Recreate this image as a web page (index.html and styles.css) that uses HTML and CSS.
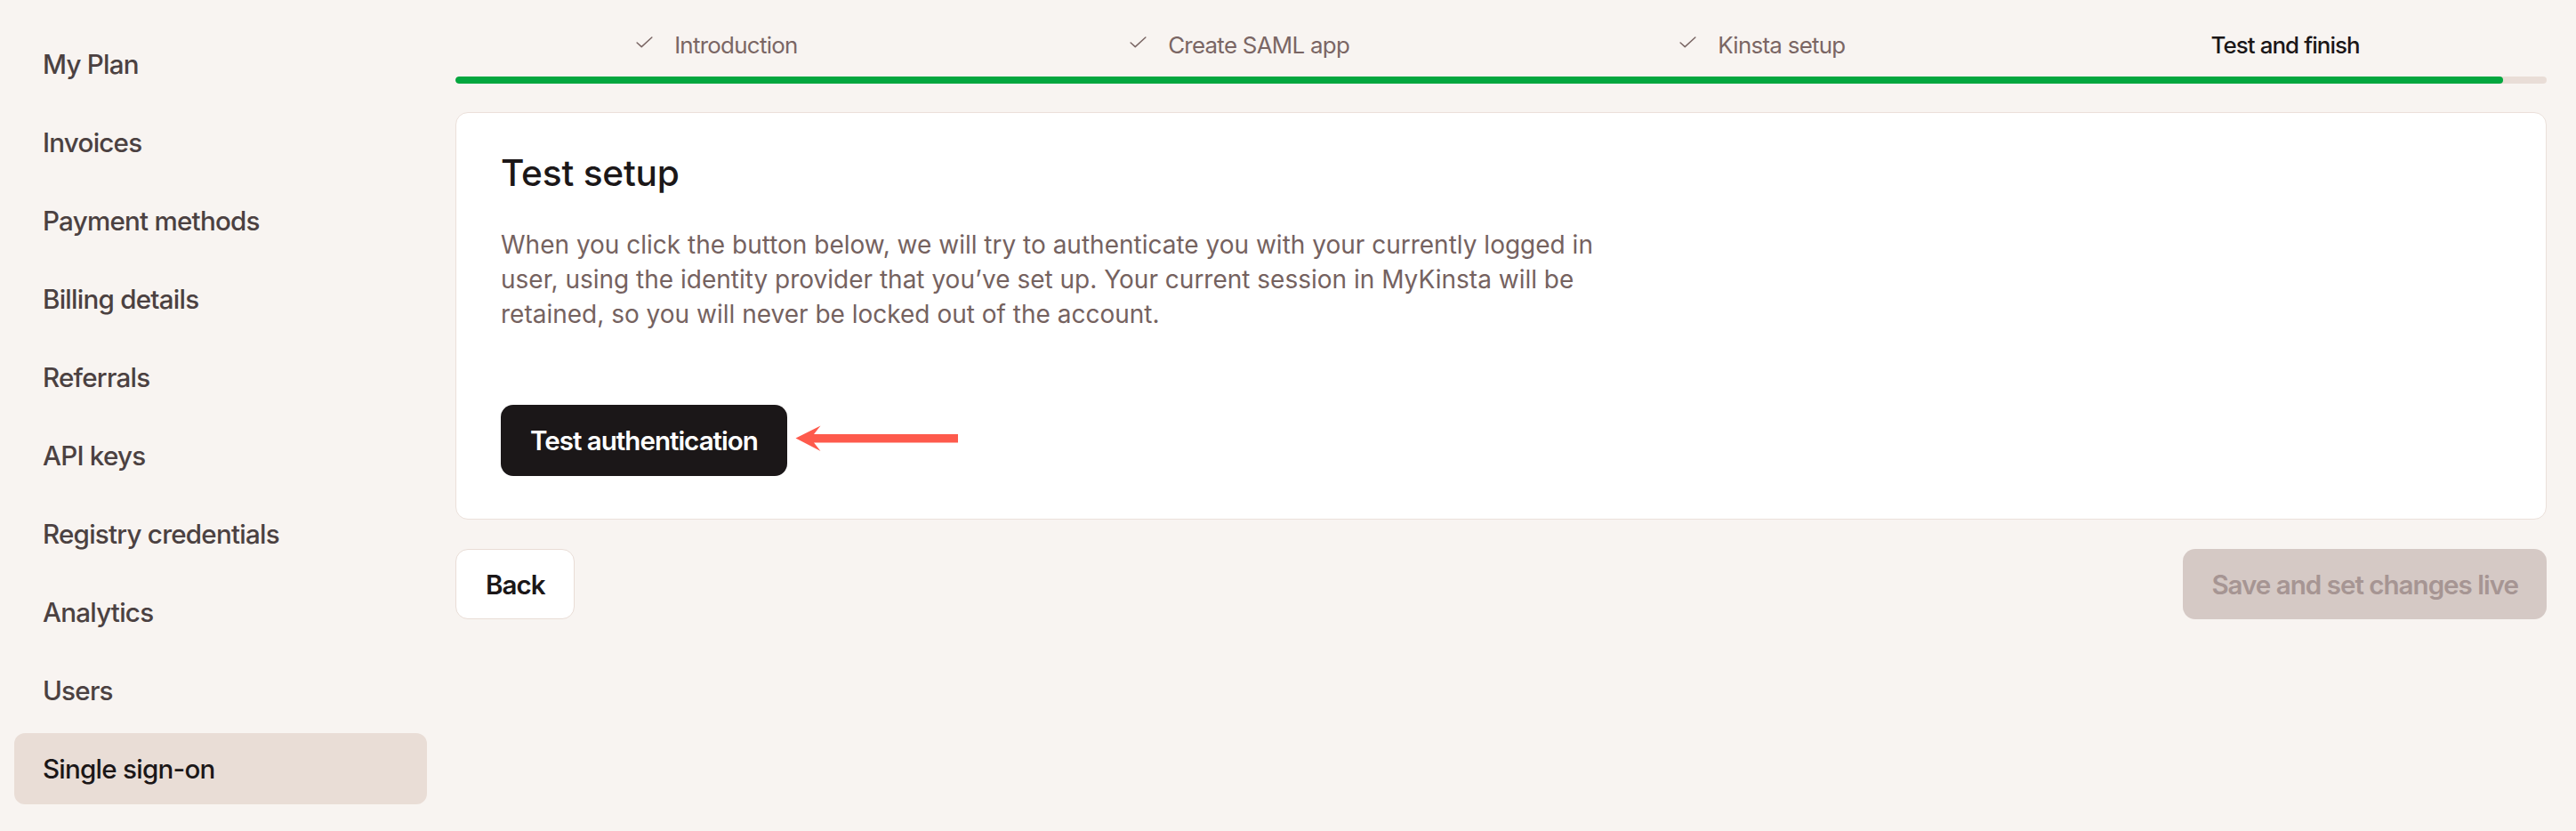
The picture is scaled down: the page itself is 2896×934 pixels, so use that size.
FILE: index.html
```html
<!DOCTYPE html>
<html lang="en">
<head>
<meta charset="utf-8">
<title>Single sign-on</title>
<link rel="stylesheet" href="styles.css">
</head>
<body>
<div class="layout">
  <nav class="sidebar">
    <a class="nav-item">My Plan</a>
    <a class="nav-item">Invoices</a>
    <a class="nav-item">Payment methods</a>
    <a class="nav-item">Billing details</a>
    <a class="nav-item">Referrals</a>
    <a class="nav-item">API keys</a>
    <a class="nav-item">Registry credentials</a>
    <a class="nav-item">Analytics</a>
    <a class="nav-item">Users</a>
    <a class="nav-item active">Single sign-on</a>
  </nav>
  <main class="main">
    <div class="stepper">
      <div class="steps">
        <div class="step done">
          <svg class="check" viewBox="0 0 20 14" width="20" height="14"><path d="M1 7.5 L6.5 12.5 L19 1" fill="none" stroke="currentColor" stroke-width="1.6" stroke-linecap="round" stroke-linejoin="round"/></svg>
          <span>Introduction</span>
        </div>
        <div class="step done">
          <svg class="check" viewBox="0 0 20 14" width="20" height="14"><path d="M1 7.5 L6.5 12.5 L19 1" fill="none" stroke="currentColor" stroke-width="1.6" stroke-linecap="round" stroke-linejoin="round"/></svg>
          <span>Create SAML app</span>
        </div>
        <div class="step done">
          <svg class="check" viewBox="0 0 20 14" width="20" height="14"><path d="M1 7.5 L6.5 12.5 L19 1" fill="none" stroke="currentColor" stroke-width="1.6" stroke-linecap="round" stroke-linejoin="round"/></svg>
          <span>Kinsta setup</span>
        </div>
        <div class="step current">
          <span>Test and finish</span>
        </div>
      </div>
      <div class="track"><div class="fill"></div></div>
    </div>

    <section class="card">
      <h2 class="card-title">Test setup</h2>
      <p class="card-text">When you click the button below, we will try to authenticate you with your currently logged in user, using the identity provider that you’ve set up. Your current session in MyKinsta will be retained, so you will never be locked out of the account.</p>
      <div class="action-row">
        <button class="btn btn-dark">Test authentication</button>
        <svg class="arrow" viewBox="0 0 184 30" width="184" height="30"><polygon points="0.5,14.5 28.5,0.5 21,10 183,10 183,19.5 21,19.5 28.5,29" fill="#fe5a4c"/></svg>
      </div>
    </section>

    <div class="footer-row">
      <button class="btn btn-light">Back</button>
      <button class="btn btn-disabled">Save and set changes live</button>
    </div>
  </main>
</div>
</body>
</html>
```

FILE: styles.css
```css
* { box-sizing: border-box; }

html, body {
  margin: 0;
  padding: 0;
  background: #f8f4f1;
  font-family: Inter, "Noto Sans", "Liberation Sans", sans-serif;
  -webkit-font-smoothing: antialiased;
}

.layout {
  display: flex;
  gap: 32px;
  padding: 32px 33px 0 16px;
  min-height: 934px;
}

.sidebar {
  width: 464px;
  flex: 0 0 464px;
  display: flex;
  flex-direction: column;
  gap: 8px;
}

.nav-item {
  height: 80px;
  display: flex;
  align-items: center;
  padding-left: 32px;
  border-radius: 12px;
  font-size: 29.55px;
  font-weight: 500;
  color: #4b4141;
  letter-spacing: -0.75px;
}

.nav-item.active {
  background: #e9ddd6;
  color: #1b1718;
}

.main {
  flex: 1;
  min-width: 0;
  display: flex;
  flex-direction: column;
}

.stepper {
  display: flex;
  flex-direction: column;
  gap: 17px;
}

.steps {
  display: grid;
  grid-template-columns: repeat(4, 1fr);
  height: 37px;
}

.step {
  display: flex;
  align-items: center;
  justify-content: center;
  gap: 24px;
  font-size: 25.86px;
  line-height: 36px;
  color: #7a6664;
  letter-spacing: -0.7px;
}

.step .check {
  color: #7a6664;
  margin-top: -6px;
  width: 19px;
  height: 13px;
}

.step.current {
  color: #1b1718;
  font-weight: 500;
  letter-spacing: -0.9px;
}

.track {
  height: 8px;
  border-radius: 4px;
  background: #e9ddd7;
  overflow: hidden;
}

.fill {
  width: 2302px;
  height: 8px;
  border-radius: 4px;
  background: #03a73f;
}

.card {
  margin-top: 32px;
  background: #ffffff;
  border: 1.5px solid #ebe0da;
  border-radius: 14px;
  padding: 44px 48px 48px 50px;
}

.card-title {
  margin: 0;
  font-size: 40.6px;
  line-height: 48px;
  font-weight: 500;
  color: #1b1718;
  letter-spacing: -0.2px;
}

.card-text {
  margin: 37px 0 0 0;
  max-width: 1250px;
  font-size: 28px;
  line-height: 38.8px;
  color: #75625f;
}

.action-row {
  margin-top: 83px;
  display: flex;
  align-items: center;
  gap: 9px;
}

.btn {
  height: 80px;
  border-radius: 14px;
  font-family: inherit;
  font-size: 29.55px;
  font-weight: 600;
  letter-spacing: -1px;
  padding: 0 33px;
  border: none;
  cursor: pointer;
}

.btn-dark {
  background: #1b1718;
  color: #ffffff;
}

.arrow {
  display: block;
  margin-top: -4px;
}

.footer-row {
  margin-top: 33px;
  display: flex;
  justify-content: space-between;
  align-items: center;
}

.btn-light {
  height: 79px;
  background: #ffffff;
  border: 1.5px solid #e9ddd6;
  color: #1b1718;
  padding: 0 33px;
}

.btn-disabled {
  height: 79px;
  background: #d5c9c5;
  color: #a69593;
  padding: 0 32px;
}
```
